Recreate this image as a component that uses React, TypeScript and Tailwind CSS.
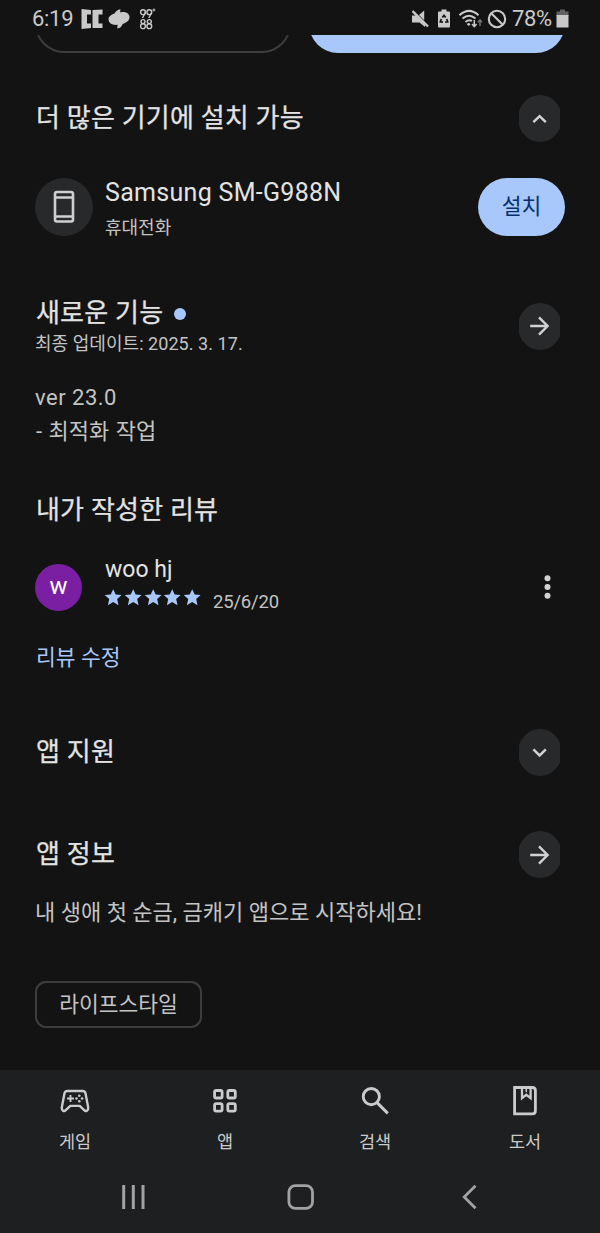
import React from 'react';

interface RoundButtonProps {
    label: string;
    children: React.ReactNode;
}

// Round button whose sides are trimmed to 41px
const RoundButton: React.FC<RoundButtonProps> = ({ label, children }) => (
    <button aria-label={label} className="w-[41px] h-[47px] shrink-0 mr-[5px] flex justify-center overflow-hidden">
        <span className="w-[44px] h-[47px] shrink-0 rounded-[50%] bg-[#28292a] flex items-center justify-center">
            {children}
        </span>
    </button>
);

const SectionTitle: React.FC<{ children: React.ReactNode }> = ({ children }) => (
    <h2 className="pl-px flex items-center text-[26px] leading-[40px] tracking-[0.2px] [-webkit-text-stroke:0.25px]">{children}</h2>
);

const ArrowIcon = () => (
    <svg width="20" height="20" viewBox="0 0 20 20" fill="none" stroke="#d2d2d2" strokeWidth="2.4">
        <path d="M0.2 10H18M9 1.4L17.6 10L9 18.6" />
    </svg>
);

const ChevronIcon = ({ up = false }: { up?: boolean }) => (
    <svg width="16" height="10" viewBox="0 0 16 10" fill="none" stroke="#d2d2d2" strokeWidth="2.5">
        <path d={up ? 'M1.4 8.2L7.6 2.2L13.8 8.2' : 'M1.4 1.4L7.6 7.4L13.8 1.4'} />
    </svg>
);

const StatusBar = () => (
    <div className="h-[35px] shrink-0 flex items-center pl-8 pr-[31px] pt-[2px] text-[#c9c9c9]">
        <span className="w-[49px] text-[22px] leading-[34px] tracking-[-0.3px] whitespace-nowrap">6:19</span>
        <svg width="22" height="20" viewBox="0 0 22 20" fill="currentColor">
            <path d="M0.5 0L10 1V5.5H6V14.5H10V19L0.5 20ZM11.5 1L21.5 0.5V5.5H17.5V14.5H21.5V19L11.5 19Z" />
        </svg>
        <svg className="ml-[5px]" width="22" height="20" viewBox="0 0 22 20" fill="currentColor">
            <path d="M12.5 0.3L12 3.4C18 2 21.8 4.5 21.5 8.8C21.2 12.5 17 14 14.3 15.4C13.8 17.6 12 19 9.2 19.5L9.6 15.8C4.5 16.4 0.5 14.4 0.5 10.3C0.7 7 4 5.3 6.6 4.6C7.5 2.5 9.5 0.8 12.5 0.3Z" />
        </svg>
        <svg className="ml-[9px]" width="17" height="22" viewBox="0 0 17 22" fill="none" stroke="currentColor" strokeWidth="1.4">
            <circle cx="4" cy="4.2" r="2.4" />
            <circle cx="10.3" cy="4.2" r="2.4" />
            <path d="M6.4 4.5L3.5 10M12.7 4.5L9.8 10" />
            <path d="M13.4 2H16.4M14.9 0.5V3.5" strokeWidth="1" />
            <circle cx="4" cy="13.6" r="2" />
            <circle cx="4" cy="18.2" r="2.4" />
            <circle cx="10.3" cy="13.6" r="2" />
            <circle cx="10.3" cy="18.2" r="2.4" />
        </svg>
        <div className="ml-auto flex items-center">
            <svg width="18" height="18" viewBox="0 0 18 18" fill="currentColor">
                <path d="M0 5.5H4L13 14.5V17L7.5 12.5H0ZM7 5L12.2 0.5V10.3Z" />
                <path d="M0.5 1L16 16.5" stroke="currentColor" strokeWidth="2.4" />
            </svg>
            <svg className="ml-[7px]" width="14" height="19" viewBox="0 0 14 19" fill="none">
                <path d="M4.5 0.5H9.5V2.5H12.2Q13 2.5 13 3.5V17.5Q13 18.5 12 18.5H2Q1 18.5 1 17.5V3.5Q1 2.5 1.8 2.5H4.5Z" fill="currentColor" />
                <path d="M5.3 8.6L7 6.4L8.7 8.6M9.7 10L10.7 12.8L8.2 13.1M6 13.1L3.3 12.8L4.3 10" stroke="#131313" strokeWidth="1.7" />
            </svg>
            <svg className="ml-[8px]" width="24" height="20" viewBox="0 0 24 20" fill="none" stroke="currentColor" strokeWidth="2">
                <path d="M0.5 6.2Q10 -2.5 19.5 6.2M3.5 9.6Q10 3.8 16.5 9.6M6.5 12.9Q10 10 13 12" />
                <circle cx="9.7" cy="15.3" r="1.4" fill="currentColor" stroke="none" />
                <path d="M15.3 11V17M13 15L15.3 17.7L17.6 15" strokeWidth="1.5" />
                <path d="M21 17V11M19 13.2L21 10.8L23 13.2" stroke="#747474" strokeWidth="1.5" />
            </svg>
            <svg className="ml-[4px]" width="20" height="20" viewBox="0 0 20 20" fill="none" stroke="currentColor" strokeWidth="2.1">
                <circle cx="10" cy="10" r="8.2" />
                <path d="M4.2 4.2L15.8 15.8" />
            </svg>
            <span className="ml-[5px] w-[44px] text-[22px] leading-[34px] tracking-[-0.4px] whitespace-nowrap">78%</span>
            <svg width="13" height="19" viewBox="0 0 13 19">
                <path d="M4 0.5H9V2.5H12.5V7H0.5V2.5H4Z" fill="#626262" />
                <path d="M0.5 6H12.5V18.5H0.5Z" fill="currentColor" />
            </svg>
        </div>
    </div>
);

const Star = () => (
    <svg width="19.8" height="18" viewBox="0 0 19.8 18" fill="#a8c7fa">
        <path d="M8.2 0.2L10.7 5.6L16.6 6.1L12.2 10.1L13.5 16.2L8.2 13.1L2.9 16.2L4.2 10.1L-0.2 6.1L5.7 5.6Z" />
    </svg>
);

const navItems = [
    {
        label: '게임',
        icon: (
            <svg width="30" height="30" viewBox="0 0 30 30" fill="none" stroke="currentColor" strokeWidth="2.4" strokeLinejoin="round">
                <path d="M7.3 5H22.7Q24.8 5 25.5 7.3L28.2 21.5C28.6 24.6 26 26 24.2 24.2L19.7 19.9H10.3L5.8 24.2C4 26 1.4 24.6 1.8 21.5L4.5 7.3Q5.2 5 7.3 5Z" />
                <path d="M10.5 9V16M7 12.5H14" strokeWidth="1.9" />
                <g fill="currentColor" stroke="none">
                    <circle cx="19.3" cy="9.7" r="1.3" />
                    <circle cx="16.5" cy="12.5" r="1.3" />
                    <circle cx="22.1" cy="12.5" r="1.3" />
                    <circle cx="19.3" cy="15.3" r="1.3" />
                </g>
            </svg>
        ),
    },
    {
        label: '앱',
        icon: (
            <svg width="30" height="30" viewBox="0 0 30 30" fill="none" stroke="currentColor" strokeWidth="2.8">
                <rect x="4.6" y="4.5" width="7.5" height="7.5" rx="1.6" />
                <rect x="17.8" y="4.5" width="7.5" height="7.5" rx="1.6" />
                <rect x="4.6" y="17.6" width="7.5" height="7.5" rx="1.6" />
                <rect x="17.8" y="17.6" width="7.5" height="7.5" rx="1.6" />
            </svg>
        ),
    },
    {
        label: '검색',
        icon: (
            <svg width="30" height="30" viewBox="0 0 30 30" fill="none" stroke="currentColor" strokeWidth="2.9">
                <circle cx="11.3" cy="10.6" r="8.1" />
                <path d="M16.8 16.4L27.8 27.4" />
            </svg>
        ),
    },
    {
        label: '도서',
        icon: (
            <svg width="30" height="30" viewBox="0 0 30 30" fill="none" stroke="currentColor" strokeWidth="2.8">
                <path d="M4.6 1.5H22.3Q25.4 1.5 25.4 4.6V24.8Q25.4 27.9 22.3 27.9H4.6Z" />
                <path d="M12 1.5V12.2L16.3 8.8L20.6 12.2V1.5" strokeWidth="2.3" />
                <path d="M16.3 2.4V6.2" strokeWidth="1.5" />
            </svg>
        ),
    },
];

const App: React.FC = () => {
    return (
        <div className="w-[600px] h-[1233px] overflow-hidden flex flex-col bg-[#131313] text-[#e3e3e3] font-['Roboto','Noto_Sans_CJK_KR',sans-serif]">
            <StatusBar />

            {/* Bottom edge of the action buttons scrolled under the status bar */}
            <div className="h-[18px] shrink-0 pl-[35px] pr-[35px] flex items-end justify-between overflow-hidden">
                <div className="w-[256px] h-[58px] shrink-0 rounded-full border-2 border-[#3c3d3e]" />
                <div className="w-[256px] h-[58px] shrink-0 rounded-full bg-[#a8c7fa]" />
            </div>

            <main className="flex-1 pl-[35px] pr-[35px] whitespace-nowrap">
                {/* Other devices */}
                <div className="mt-[42px] h-[47px] flex items-center justify-between">
                    <div className="pb-px">
                        <SectionTitle>더 많은 기기에 설치 가능</SectionTitle>
                    </div>
                    <RoundButton label="접기"><ChevronIcon up /></RoundButton>
                </div>
                <div className="mt-[36px] h-[58px] flex items-center">
                    <div className="w-[58px] h-[58px] rounded-full bg-[#28292a] flex items-center justify-center">
                        <svg width="22" height="34" viewBox="0 0 22 34" fill="none" stroke="#cfcfcf" strokeWidth="2.6">
                            <rect x="2" y="2" width="18" height="29.5" rx="2" />
                            <path d="M2 7.5H20M2 26.5H20" />
                        </svg>
                    </div>
                    <div className="ml-3 pt-[4px]">
                        <p className="text-[25px] leading-[34px] tracking-[0.3px]">Samsung SM-G988N</p>
                        <p className="mt-[3px] text-[18px] leading-[30px] text-[#c4c4c4]">휴대전화</p>
                    </div>
                    <button className="ml-auto w-[87px] h-[58px] rounded-full bg-[#a8c7fa] text-[#062e6f] text-[21.5px]">설치</button>
                </div>

                {/* What's new */}
                <div className="mt-[60px] h-[60px] flex items-center justify-between">
                    <div className="pt-[3px]">
                        <div className="h-[34px] flex items-center">
                            <SectionTitle>
                                새로운 기능
                                <span className="ml-[11px] mt-px w-3 h-3 rounded-full bg-[#a8c7fa]" />
                            </SectionTitle>
                        </div>
                        <p className="-mt-px text-[18px] leading-[30px] tracking-[0.05px] text-[#c4c4c4]">최종 업데이트: 2025. 3. 17.</p>
                    </div>
                    <RoundButton label="새로운 기능"><ArrowIcon /></RoundButton>
                </div>
                <div className="mt-[25px] text-[22px] leading-[33px] text-[#c4c4c4]">
                    <p className="tracking-[0.5px]">ver 23.0</p>
                    <p className="pt-px -mb-px pl-px [word-spacing:1px]">- 최적화 작업</p>
                </div>

                {/* My review */}
                <div className="mt-[43px]">
                    <SectionTitle>내가 작성한 리뷰</SectionTitle>
                </div>
                <div className="mt-[23px] h-[62px] flex items-center">
                    <div className="w-[47px] h-[47px] mt-[6px] rounded-full bg-[#7b1fa2] flex items-center justify-center text-white text-[24px] leading-none pb-[3px]">w</div>
                    <div className="ml-[23px]">
                        <p className="text-[23px] leading-[32px] pt-px">woo hj</p>
                        <div className="h-[30px] flex">
                            <div className="flex mt-[3px]">
                                {[1, 2, 3, 4, 5].map((n) => <Star key={n} />)}
                            </div>
                            <span className="ml-[9px] mt-px text-[18.5px] leading-[30px] tracking-[-0.2px] text-[#c4c4c4]">25/6/20</span>
                        </div>
                    </div>
                    <svg className="ml-auto mt-[6px] mr-[14px]" width="7" height="24" viewBox="0 0 7 24" fill="#d2d2d2">
                        <circle cx="3.5" cy="3.2" r="3" />
                        <circle cx="3.5" cy="12" r="3" />
                        <circle cx="3.5" cy="20.8" r="3" />
                    </svg>
                </div>
                <p className="mt-[25px] pl-px text-[21.5px] leading-[36px] text-[#a8c7fa]">리뷰 수정</p>

                {/* App support */}
                <div className="mt-[53px] h-[47px] flex items-center justify-between">
                    <div className="pb-px">
                        <SectionTitle>앱 지원</SectionTitle>
                    </div>
                    <RoundButton label="펼치기"><ChevronIcon /></RoundButton>
                </div>

                {/* About */}
                <div className="mt-[55px] h-[47px] flex items-center justify-between">
                    <div className="pb-px">
                        <SectionTitle>앱 정보</SectionTitle>
                    </div>
                    <RoundButton label="앱 정보"><ArrowIcon /></RoundButton>
                </div>
                <p className="mt-[17px] text-[22px] leading-[36px] text-[#c4c4c4]">내 생애 첫 순금, 금캐기 앱으로 시작하세요!</p>
                <div className="mt-[50px] w-[167px] h-[47px] rounded-[11px] border-2 border-[#3c3d3e] flex items-center justify-center pt-[2px] text-[21.5px] text-[#c4c4c4]">
                    라이프스타일
                </div>
            </main>

            <footer className="h-[163px] shrink-0 bg-[#1e1f20] text-[#cbcbcb]">
                <nav className="h-[96px] pt-[16px] grid grid-cols-4">
                    {navItems.map((item) => (
                        <div key={item.label} className="flex flex-col items-center">
                            {item.icon}
                            <span className="mt-[12px] text-[17.5px] leading-[28px]">{item.label}</span>
                        </div>
                    ))}
                </nav>
                {/* System keys */}
                <div className="h-[62px] pl-[121px] pr-[123px] flex items-center justify-between">
                    <svg width="25" height="26" viewBox="0 0 25 26" stroke="#a2a2a2" strokeWidth="3">
                        <path d="M2.7 1V25M12.3 1V25M22 1V25" />
                    </svg>
                    <svg className="mr-[7px]" width="27" height="26" viewBox="0 0 27 26" fill="none" stroke="#a2a2a2" strokeWidth="2.8">
                        <rect x="1.9" y="1.6" width="23.6" height="22.8" rx="6.5" />
                    </svg>
                    <svg width="15" height="26" viewBox="0 0 15 26" fill="none" stroke="#a2a2a2" strokeWidth="2.8">
                        <path d="M13.5 1.7L2.2 13L13.5 24.3" />
                    </svg>
                </div>
            </footer>
        </div>
    );
};

export default App;
